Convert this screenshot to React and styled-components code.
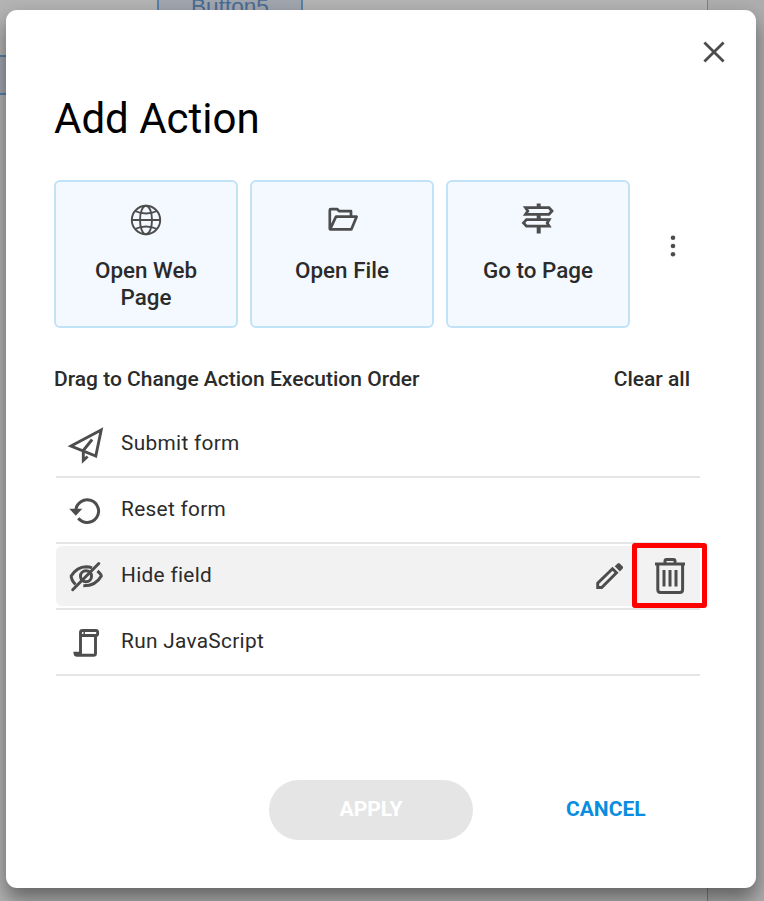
import React from "react";
import styled, { createGlobalStyle } from "styled-components";

const GlobalStyle = createGlobalStyle`
  *, *::before, *::after { box-sizing: border-box; }
  body { margin: 0; font-family: Roboto, sans-serif; color: #2b2b2b; overflow: hidden; }
  button { font: inherit; color: inherit; border: 0; background: none; padding: 0; cursor: pointer; }
`;

const Backdrop = styled.main`
  position: relative;
  width: 764px;
  height: 901px;
  padding: 10px 8px 13px 6px;
  overflow: hidden;
  background: linear-gradient(to right, #b3b3b3 707px, #7f7f7f 707px, #7f7f7f 708px, #adadad 708px);
`;

const CanvasField = styled.div`
  position: absolute;
  left: ${(p) => p.$x}px;
  top: ${(p) => p.$y}px;
  width: ${(p) => p.$w}px;
  height: 40px;
  border: 2px solid #5580aa;
  background: #a1a5ae;
  color: #4a6c93;
  font: 22.6px/38px "Liberation Sans", sans-serif;
  text-align: center;
`;

const Dialog = styled.section`
  position: relative;
  width: 750px;
  height: 878px;
  padding: 21px 21px 48px 48px;
  display: flex;
  flex-direction: column;
  background: #fff;
  border-radius: 11px;
  box-shadow: 0 12px 20px rgba(0, 0, 0, 0.4), 0 4px 16px rgba(0, 0, 0, 0.06);
`;

const Icon = styled.svg`
  display: block;
  flex: none;
  fill: none;
  stroke: #4d4d4d;
  stroke-width: ${(p) => p.$weight || 3};
`;

const CloseButton = styled.button`
  align-self: flex-end;
  width: 42px;
  height: 42px;
  display: grid;
  place-items: center;
`;

const Title = styled.h1`
  margin: 21px 0 0;
  height: 50px;
  font-size: 42px;
  line-height: 50px;
  font-weight: 400;
  color: #000;
`;

const ActionCards = styled.div`
  display: flex;
  align-items: center;
  gap: 12px;
  margin-top: 36px;
`;

const ActionCard = styled.button`
  width: 184px;
  height: 148px;
  padding: 20px 20px 0;
  display: flex;
  flex-direction: column;
  align-items: center;
  gap: 19px;
  border: 2px solid #c2e2f8;
  border-radius: 6px;
  background: #f3f9fe;
`;

const CardLabel = styled.span`
  font-size: 22.4px;
  line-height: 27px;
  font-weight: 500;
`;

const MoreButton = styled.button`
  width: 24px;
  height: 40px;
  margin: -17px 0 0 18.5px;
  display: grid;
  place-items: center;
`;

const ListHeader = styled.header`
  width: 636px;
  display: flex;
  justify-content: space-between;
  margin-top: 38px;
  font-size: 21px;
  line-height: 26px;
  font-weight: 500;
`;

const ClearButton = styled.button`
  font-weight: 500;
  line-height: 26px;
`;

const ActionList = styled.ul`
  list-style: none;
  width: 644px;
  margin: 20px 0 0 2px;
  padding: 0;
`;

const ActionRow = styled.li`
  height: 66px;
  padding: 2px 0;
  border-bottom: 2px solid #e5e5e5;
`;

const RowBody = styled.div`
  position: relative;
  height: 60px;
  padding-left: 10px;
  display: flex;
  align-items: center;
  border-radius: 6px;
  background: ${(p) => (p.$active ? "#f2f2f2" : "transparent")};
`;

const RowLabel = styled.span`
  flex: 1;
  margin: -3px 0 0 15px;
  font-size: 20.8px;
  letter-spacing: 0.32px;
`;

const EditButton = styled.button`
  width: 40px;
  height: 40px;
  margin-right: 70px;
  display: grid;
  place-items: center;
`;

const DeleteButton = styled.button`
  position: absolute;
  right: -7px;
  top: -3px;
  width: 75px;
  height: 65px;
  display: grid;
  place-items: center;
  border: 5px solid #f00;
  border-radius: 3px;
`;

const Footer = styled.footer`
  display: flex;
  align-items: center;
  margin: auto 0 0 215px;
  gap: 93px;
`;

const FooterButton = styled.button`
  font-size: 21px;
  font-weight: 700;
  color: #0a8de0;
  padding-bottom: 3px;
`;

const ApplyButton = styled(FooterButton)`
  width: 204px;
  height: 60px;
  border-radius: 30px;
  background: #e5e5e5;
  color: #fff;
`;

const Globe = () => (
  <Icon width="40" height="36" viewBox="126 202 40 36" $weight={1.9}>
    <circle cx="146" cy="220" r="14.2" />
    <ellipse cx="146" cy="220" rx="6" ry="14.2" />
    <path d="M131.8 220H160.2M135 211q11 5 22 0M135 229q11-5 22 0" />
  </Icon>
);

const Folder = () => (
  <Icon width="40" height="36" viewBox="322 202 40 36" $weight={2.7}>
    <path d="M329.8 229V210.2q0-1 1-1h6.5l2 2H351v5M330 229.4h21.3l5.3-12.7h-20.6z" strokeLinejoin="round" />
  </Icon>
);

const Signpost = () => (
  <Icon width="40" height="36" viewBox="518 202 40 36" $weight={2.8}>
    <path d="M538.7 203.5v5M538.7 215v5M538.7 226.5v7" strokeWidth="4" />
    <path d="M525.5 207.7H549l3 3.3-3 3.3H525.5l2.3-3.3zM549.2 219.6H526.5l-3 3.3 3 3.3h22.7l-2-3.3z" />
  </Icon>
);

const Plane = () => (
  <Icon width="40" height="44" viewBox="66 422 40 44" $weight={2.9}>
    <path d="M71 446 101.2 430 95.8 456zM83.3 450.5v10l4.3-4M83.3 450.5l8.8-11" />
  </Icon>
);

const Reset = () => (
  <Icon width="40" height="44" viewBox="67 488.5 40 44" $weight={3}>
    <path d="M76.8 511a11.4 11.4 0 1 1 2.5 7.8" />
    <path d="M70.3 509.3h13L76.8 516.3z" fill="#4d4d4d" stroke="none" />
  </Icon>
);

const HiddenEye = () => (
  <Icon width="40" height="44" viewBox="66 554 40 44" $weight={3}>
    <path d="M75.5 584.5Q71.2 580 71.2 576 77 567 86 566.8q3.5 0 6 1M97.5 571q3.5 3 3.8 5-5.5 10-18 9.8" />
    <circle cx="86" cy="576.2" r="5.5" />
    <path d="M72.7 589.7 98.8 563.5" strokeLinecap="round" />
  </Icon>
);

const Scroll = () => (
  <Icon width="40" height="44" viewBox="66 620 40 44" $weight={2.9}>
    <path d="M80.5 654V632.5q0-2 2-2H96q1.7 0 1.7 2.5T96 635.5H80.5M95.5 635.5v18q0 1.8-2 1.8H77q-1.7 0-2-2h6" />
    <path d="M84.2 631v4" strokeWidth="1.5" />
  </Icon>
);

const Pencil = () => (
  <Icon width="40" height="40" viewBox="590 556.5 40 40" $weight={2.9}>
    <path d="M597.7 588v-4.3l14.8-14.5 4 4-14.8 14.8z" />
    <path d="M614.7 566.8l3-2.8q1-.8 2 0l3 3q.8 1 0 2l-2.8 2.9z" fill="#4d4d4d" stroke="none" />
  </Icon>
);

const Trash = () => (
  <Icon width="36" height="40" viewBox="652 556 36 40" $weight={3}>
    <path d="M655 564h30M665 563v-2q0-1.5 1.5-1.5h7q1.5 0 1.5 1.5v2M657.8 564v25.5q0 3 3 3h18.8q3 0 3-3V564" />
    <path d="M664 570v16.5M670 570v16.5M676 570v16.5" />
  </Icon>
);

const cards = [
  { label: "Open Web Page", Glyph: Globe },
  { label: "Open File", Glyph: Folder },
  { label: "Go to Page", Glyph: Signpost },
];

const actions = [
  { label: "Submit form", Glyph: Plane },
  { label: "Reset form", Glyph: Reset },
  { label: "Hide field", Glyph: HiddenEye, active: true },
  { label: "Run JavaScript", Glyph: Scroll },
];

export default function App() {
  return (
    <>
      <GlobalStyle />
      <Backdrop>
        <CanvasField $x={157} $y={-14} $w={146}>Button5</CanvasField>
        <CanvasField $x={-140} $y={55} $w={160} />
        <Dialog role="dialog" aria-label="Add Action">
          <CloseButton aria-label="Close">
            <Icon width="24" height="24" viewBox="0 0 24 24" $weight={2.8}>
              <path d="M2.4 2.4l19.2 19.2M21.6 2.4L2.4 21.6" />
            </Icon>
          </CloseButton>
          <Title>Add Action</Title>
          <ActionCards>
            {cards.map(({ label, Glyph }) => (
              <ActionCard key={label}>
                <Glyph />
                <CardLabel>{label}</CardLabel>
              </ActionCard>
            ))}
            <MoreButton aria-label="More actions">
              <Icon width="8" height="24" viewBox="0 0 8 24">
                <g fill="#4d4d4d" stroke="none">
                  <circle cx="4" cy="3.8" r="2.3" />
                  <circle cx="4" cy="12" r="2.3" />
                  <circle cx="4" cy="20.3" r="2.3" />
                </g>
              </Icon>
            </MoreButton>
          </ActionCards>
          <ListHeader>
            <span>Drag to Change Action Execution Order</span>
            <ClearButton>Clear all</ClearButton>
          </ListHeader>
          <ActionList>
            {actions.map(({ label, Glyph, active }) => (
              <ActionRow key={label}>
                <RowBody $active={active}>
                  <Glyph />
                  <RowLabel>{label}</RowLabel>
                  {active && (
                    <>
                      <EditButton aria-label="Edit"><Pencil /></EditButton>
                      <DeleteButton aria-label="Delete"><Trash /></DeleteButton>
                    </>
                  )}
                </RowBody>
              </ActionRow>
            ))}
          </ActionList>
          <Footer>
            <ApplyButton disabled>APPLY</ApplyButton>
            <FooterButton>CANCEL</FooterButton>
          </Footer>
        </Dialog>
      </Backdrop>
    </>
  );
}
